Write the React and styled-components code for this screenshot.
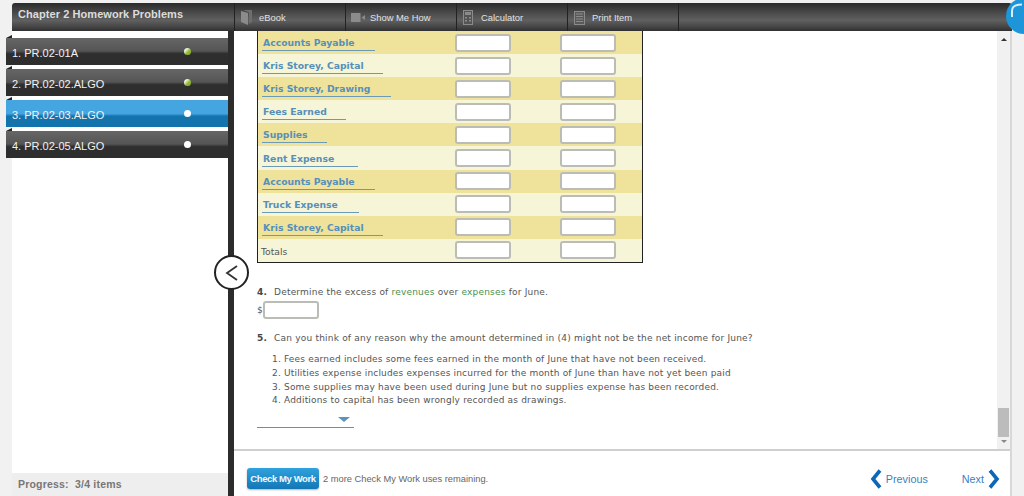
import React from "react";
import styled, { createGlobalStyle } from "styled-components";

const Global = createGlobalStyle`
  html, body { margin: 0; padding: 0; background: #f1f1f1; }
  * { box-sizing: border-box; }
`;

const Page = styled.div`
  position: relative;
  width: 1024px;
  height: 496px;
  overflow: hidden;
  padding: 3px 12px 0;
  background: #f1f1f1;
  font-family: "Liberation Sans", Arial, sans-serif;
`;

const TopBar = styled.header`
  display: flex;
  height: 28px;
  border-radius: 3px 3px 0 0;
  background: linear-gradient(#2b2b2b 0%, #4a4a4a 35%, #606060 62%, #454545 85%, #303030 100%);
`;

const Title = styled.div`
  width: 222px;
  padding: 5px 0 0 6px;
  font-size: 11px;
  font-weight: bold;
  letter-spacing: 0.07px;
  color: #dcdcdc;
`;

const ToolItem = styled.div`
  display: flex;
  align-items: center;
  width: 111px;
  padding-top: 1px;
  border-left: 1px solid #222;
  font-size: 9.4px;
  color: #e2e2e2;
  svg { flex: none; margin-left: ${(p) => p.$iconLeft}px; margin-right: ${(p) => p.$iconGap}px; }
`;

const Body = styled.div`
  display: flex;
  height: 465px;
`;

const Sidebar = styled.aside`
  display: flex;
  flex-direction: column;
  width: 222px;
  flex: none;
  border-right: 6px solid #2c2c2c;
`;

const TabList = styled.div`
  flex: 1;
  display: flex;
  flex-direction: column;
  gap: 4px;
  padding-top: 7px;
  background: #fff;
`;

const Tab = styled.div`
  position: relative;
  display: flex;
  align-items: center;
  justify-content: space-between;
  height: 27px;
  margin-left: -6px;
  padding: 2px 37px 0 6px;
  font-size: 11px;
  color: #f2f2f2;
  background: ${(p) =>
    p.$active
      ? "linear-gradient(#45a5e0 0%, #45a5e0 50%, #1273ad 60%, #1273ad 100%)"
      : "linear-gradient(#666 0%, #555 48%, #2e2e2e 58%, #2e2e2e 100%)"};
  &::before {
    content: "";
    position: absolute;
    left: 0;
    top: -3px;
    border-style: solid;
    border-width: 0 0 3px 6px;
    border-color: transparent transparent #222 transparent;
  }
`;

const Dot = styled.span`
  width: 7px;
  height: 7px;
  margin-top: -2px;
  border-radius: 50%;
  background: ${(p) => (p.$done ? "linear-gradient(135deg, #eef3dc 25%, #8eb52f 60%)" : "#fff")};
`;

const Progress = styled.div`
  height: 23px;
  padding: 5px 0 0 6px;
  font-size: 10.5px;
  font-weight: bold;
  letter-spacing: 0.2px;
  color: #777;
  background: #eeeeee;
`;

const Main = styled.main`
  flex: 1;
  display: flex;
  flex-direction: column;
  background: #fff;
  border-right: 2px solid #d8d8d8;
`;

const ScrollArea = styled.div`
  flex: 1;
  min-height: 0;
  display: flex;
  border-bottom: 2px solid #cfcfcf;
`;

const Content = styled.div`
  flex: 1;
  overflow: hidden;
  padding-left: 23px;
  font-family: "DejaVu Sans", Verdana, sans-serif;
  font-size: 9px;
  color: #555;
`;

const Table = styled.div`
  width: 386px;
  border: 1px solid #222;
  border-top: none;
`;

const Row = styled.div`
  display: grid;
  grid-template-columns: 197px 56px 49px 56px;
  align-items: center;
  height: 23.1px;
  background: ${(p) => (p.$odd ? "#efe29b" : "#f6f5d7")};
`;

const Account = styled.span`
  justify-self: start;
  width: ${(p) => p.$w}px;
  margin-left: 4px;
  padding: 2px 0 0 1px;
  height: 17px;
  line-height: 14px;
  font-size: 9.25px;
  font-weight: bold;
  color: #5590bb;
  white-space: nowrap;
  border-bottom: 1.5px solid #6a9ab6;
`;

const TotalLabel = styled.span`
  padding: 2px 0 0 3px;
  font-size: 9.2px;
  color: #555;
`;

const Field = styled.div`
  width: 56px;
  height: 18px;
  background: #fff;
  border: 2px solid #bcbcb6;
  border-radius: 3px;
`;

const Question = styled.p`
  margin: ${(p) => p.$top}px 0 0;
  line-height: 12px;
  white-space: nowrap;
  letter-spacing: ${(p) => p.$track}px;
  b { margin-right: 7px; color: #444; }
`;

const Term = styled.span`
  color: #4c8f4f;
`;

const Amount = styled.div`
  display: flex;
  align-items: center;
  margin-top: 3px;
  span { width: 6px; }
`;

const Choices = styled.ol`
  margin: 9px 0 0;
  padding: 0 0 0 27px;
  line-height: 13.8px;
  letter-spacing: 0.18px;
  white-space: nowrap;
`;

const Select = styled.div`
  display: flex;
  justify-content: flex-end;
  width: 97px;
  height: 16px;
  margin-top: 4px;
  padding: 5px 4px 0 0;
  border-bottom: 1.5px solid #5a93c0;
  &::after {
    content: "";
    border-style: solid;
    border-width: 5px 6px 0;
    border-color: #5a93c0 transparent transparent;
    height: 0;
  }
`;

const Scrollbar = styled.div`
  display: flex;
  flex-direction: column;
  align-items: center;
  justify-content: space-between;
  width: 13px;
  flex: none;
  padding: 7px 0 6px;
  background: #f1f1f1;
`;

const Thumb = styled.div`
  width: 11px;
  height: 29px;
  margin-top: auto;
  margin-bottom: 3px;
  background: #bcbcbc;
`;

const Arrow = styled.div`
  border-style: solid;
  border-width: ${(p) => (p.$up ? "0 3px 3px" : "3px 3px 0")};
  border-color: ${(p) =>
    p.$up ? "transparent transparent #333" : "#888 transparent transparent"};
`;

const Footer = styled.footer`
  display: flex;
  align-items: center;
  height: 45px;
  padding: 10px 10px 0 13px;
`;

const CheckButton = styled.div`
  width: 72px;
  height: 21px;
  line-height: 21px;
  text-align: center;
  border-radius: 3px;
  font-size: 9.5px;
  font-weight: bold;
  letter-spacing: -0.4px;
  color: #f2f9fd;
  background: linear-gradient(#30a2de, #1377b5);
  box-shadow: 0 1px 2px rgba(0, 0, 0, 0.3);
`;

const Remaining = styled.span`
  margin-left: 4px;
  font-size: 9.3px;
  color: #666;
`;

const Nav = styled.div`
  display: flex;
  align-items: center;
  gap: 4px;
  margin-left: ${(p) => p.$left};
  font-size: 10.8px;
  color: #3b7fbd;
`;

const Collapse = styled.div`
  position: absolute;
  left: 214px;
  top: 255px;
  display: flex;
  align-items: center;
  justify-content: center;
  width: 35px;
  height: 35px;
  border: 2px solid #222;
  border-radius: 50%;
  background: #fff;
`;

const Headset = styled.div`
  position: absolute;
  left: 1006px;
  top: -2px;
  display: flex;
  padding: 5px 0 0 4px;
  width: 36px;
  height: 36px;
  border-radius: 50%;
  background: #1e95d8;
`;

const icon = "#8b8b8b";
const BookIcon = () => (
  <svg width="11" height="15" viewBox="0 0 11 15">
    <path d="M0 1 L7 3 V15 L0 12 Z" fill={icon} />
    <path d="M2 0 H11 V12 L8 14 V2.5 Z" fill="#6d6d6d" />
  </svg>
);
const VideoIcon = () => (
  <svg width="14" height="9" viewBox="0 0 14 9">
    <rect width="9.5" height="9" fill={icon} />
    <path d="M10.5 4.5 L14 2 V7 Z" fill={icon} />
  </svg>
);
const CalcIcon = () => (
  <svg width="10" height="15" viewBox="0 0 10 15">
    <rect x="0.5" y="0.5" width="9" height="14" fill="#555" stroke={icon} />
    <rect x="2" y="2" width="6" height="3" fill={icon} />
    <path d="M2 7h2v1.5H2zM6 7h2v1.5H6zM2 10h2v1.5H2zM6 10h2v1.5H6z" fill={icon} />
  </svg>
);
const DocIcon = () => (
  <svg width="11" height="14" viewBox="0 0 11 14">
    <rect x="0.5" y="0.5" width="10" height="13" fill="#5a5a5a" stroke={icon} />
    <path d="M2 3h7M2 5.5h7M2 8h7M2 10.5h7" stroke={icon} strokeWidth="1.2" />
  </svg>
);
const Chevron = ({ dir }) => (
  <svg width="12" height="20" viewBox="0 0 12 20">
    <path
      d={dir === "left" ? "M10 1.5 L3 10 L10 18.5" : "M2 1.5 L9 10 L2 18.5"}
      fill="none"
      stroke="#0c67b9"
      strokeWidth="3.6"
    />
  </svg>
);

const tabs = [
  { label: "1. PR.02-01A", done: true },
  { label: "2. PR.02-02.ALGO", done: true },
  { label: "3. PR.02-03.ALGO", active: true },
  { label: "4. PR.02-05.ALGO" },
];

const accounts = [
  ["Accounts Payable", 113],
  ["Kris Storey, Capital", 121],
  ["Kris Storey, Drawing", 129],
  ["Fees Earned", 84],
  ["Supplies", 65],
  ["Rent Expense", 96],
  ["Accounts Payable", 113],
  ["Truck Expense", 97],
  ["Kris Storey, Capital", 121],
];

export default function App() {
  return (
    <Page>
      <Global />
      <TopBar>
        <Title>Chapter 2 Homework Problems</Title>
        <ToolItem $iconLeft={6} $iconGap={7}><BookIcon />eBook</ToolItem>
        <ToolItem $iconLeft={5} $iconGap={5}><VideoIcon />Show Me How</ToolItem>
        <ToolItem $iconLeft={6} $iconGap={8}><CalcIcon />Calculator</ToolItem>
        <ToolItem $iconLeft={6} $iconGap={7}><DocIcon />Print Item</ToolItem>
        <ToolItem />
      </TopBar>
      <Body>
        <Sidebar>
          <TabList>
            {tabs.map((t) => (
              <Tab key={t.label} $active={t.active}>
                {t.label}
                <Dot $done={t.done} />
              </Tab>
            ))}
          </TabList>
          <Progress>Progress:&nbsp; 3/4 items</Progress>
        </Sidebar>
        <Main>
          <ScrollArea>
            <Content>
              <Table>
                {accounts.map(([name, w], i) => (
                  <Row key={i} $odd={i % 2 === 0}>
                    <Account $w={w}>{name}</Account>
                    <Field />
                    <span />
                    <Field />
                  </Row>
                ))}
                <Row>
                  <TotalLabel>Totals</TotalLabel>
                  <Field />
                  <span />
                  <Field />
                </Row>
              </Table>
              <Question $top={23} $track={0.19}>
                <b>4.</b>Determine the excess of <Term>revenues</Term> over <Term>expenses</Term> for June.
              </Question>
              <Amount>
                <span>$</span>
                <Field />
              </Amount>
              <Question $top={13} $track={0.2}>
                <b>5.</b>Can you think of any reason why the amount determined in (4) might not be the net income for June?
              </Question>
              <Choices>
                <li>Fees earned includes some fees earned in the month of June that have not been received.</li>
                <li>Utilities expense includes expenses incurred for the month of June than have not yet been paid</li>
                <li>Some supplies may have been used during June but no supplies expense has been recorded.</li>
                <li>Additions to capital has been wrongly recorded as drawings.</li>
              </Choices>
              <Select />
            </Content>
            <Scrollbar>
              <Arrow $up />
              <Thumb />
              <Arrow />
            </Scrollbar>
          </ScrollArea>
          <Footer>
            <CheckButton>Check My Work</CheckButton>
            <Remaining>2 more Check My Work uses remaining.</Remaining>
            <Nav $left="auto"><Chevron dir="left" />Previous</Nav>
            <Nav $left="34px">Next<Chevron dir="right" /></Nav>
          </Footer>
        </Main>
      </Body>
      <Collapse>
        <svg width="16" height="18" viewBox="0 0 16 18">
          <path d="M13 2 L3 9 L13 16" fill="none" stroke="#333" strokeWidth="1.8" />
        </svg>
      </Collapse>
      <Headset>
        <svg width="16" height="16" viewBox="0 0 16 16">
          <path d="M2 14 V8 C2 3 6 1.5 12 1.5" fill="none" stroke="#d8eef9" strokeWidth="2" />
        </svg>
      </Headset>
    </Page>
  );
}
